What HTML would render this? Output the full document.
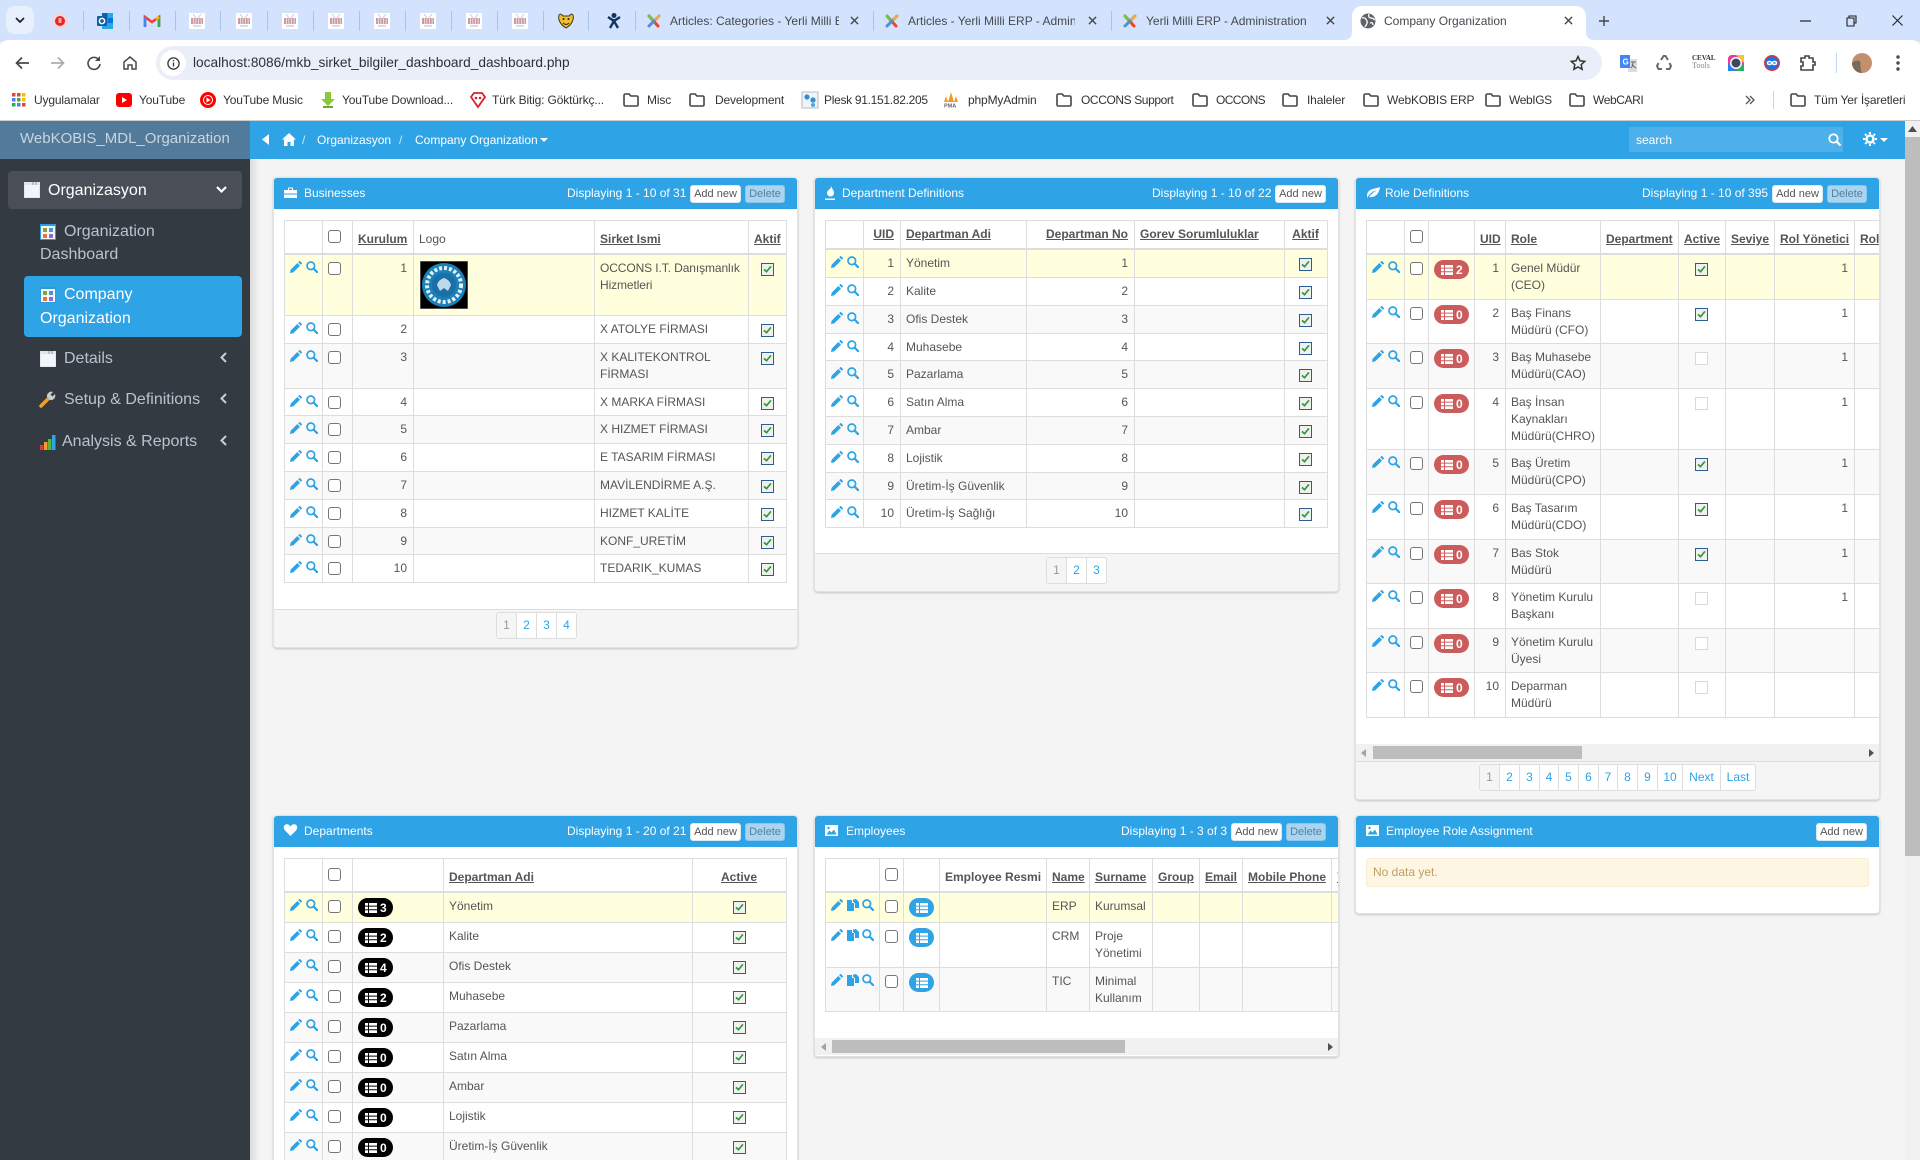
<!DOCTYPE html>
<html style="overflow:hidden;width:1920px;height:1160px"><head><meta charset="utf-8"><title>Company Organization</title>
<style>
html,body{margin:0;padding:0}
#root{position:relative;width:1920px;height:1160px;overflow:hidden;background:#f4f4f4;font-family:"Liberation Sans",Arial,sans-serif;color:#555}
.a,.t,.ic{position:absolute}
.t{white-space:nowrap}
.tb{font-size:12px;color:#45494f;line-height:16px;top:13px}
.bk{font-size:12px;color:#333;line-height:16px;top:92px;letter-spacing:-.15px}
.ic{overflow:visible}
.sep{position:absolute;width:1px;height:20px;top:11px;background:#a9c3ea}
.sd{font-size:16px;line-height:23px;color:#b9c3cd}
.ph{position:absolute;height:31px;background:#2ea3e6;border-radius:3px 3px 0 0}
.ptt{position:absolute;white-space:nowrap;font-size:12px;line-height:16px;color:#fff}
.btn{position:absolute;box-sizing:border-box;height:18px;background:#fff;border:1px solid #d8e8f2;border-radius:3px;font-size:11px;line-height:16px;text-align:center;color:#555}
.del{background:#a9d5f0;color:#567f9c;border-color:#8cc6ea}
.pn{position:absolute;background:#fff;border-radius:3px;box-shadow:0 0 0 1px #e2e2e2,0 1px 2px 1px rgba(0,0,0,.2)}
.ft{position:absolute;background:#f5f5f5;border-top:1px solid #ddd;box-sizing:border-box;border-radius:0 0 3px 3px}
.pg{position:absolute;display:flex;height:27px;box-sizing:border-box;border:1px solid #ddd;border-radius:3px;background:#fff;font-size:12px;line-height:25px;color:#2ea3e6}
.pg b{font-weight:normal;text-align:center;box-sizing:border-box;border-left:1px solid #ddd}
.pg b:first-child{border-left:0;background:#f5f5f5;color:#999}
table.g{position:absolute;table-layout:fixed;border-collapse:separate;border-spacing:0;border-top:1px solid #ddd;border-left:1px solid #ddd;font-size:12px;line-height:17px;color:#555;background:#fff}
.g td,.g th{box-sizing:border-box;border-right:1px solid #ddd;border-bottom:1px solid #ddd;padding:5px 6px 4px 5px;vertical-align:top;position:relative}
.g th{vertical-align:bottom;border-bottom-width:2px;font-weight:bold;text-align:left;white-space:nowrap;padding-bottom:5px}
.g th u{text-decoration:underline}
.r{text-align:right!important}
.c{text-align:center!important}
.y td{background:#ffffdd}
.o td{background:#f9f9f9}
.cb{position:absolute;left:5px;top:7px;display:block;width:13px;height:13px;box-sizing:border-box;border:1px solid #767676;border-radius:3px;background:#fff}
th .cb{top:9px}
.ck,.un{display:block;width:13px;height:13px;box-sizing:border-box;margin:3px auto 0;position:relative}
.ck{border:1px solid #2b5f92;background:#f0f0f0}
.ck:after{content:"";position:absolute;left:3px;top:0;width:3px;height:7px;box-sizing:content-box;border:solid #2f9a3a;border-width:0 2px 2px 0;transform:rotate(40deg) scale(.85)}
.un{border:1px solid #d9d9d9;background:#fff}
svg.p,svg.m,svg.f{position:absolute;top:6px;width:12px;height:12px;overflow:visible}
svg.p{left:5px}svg.m{left:21px}
.e5 svg.f{left:21px}.e5 svg.m{left:36px}
.bd{position:absolute;left:5px;top:5px;height:19px;width:35px;border-radius:10px;color:#fff;font-weight:bold;font-size:12px;line-height:20px;box-sizing:border-box;padding-left:22px}
.bd svg{position:absolute;left:7px;top:5px;width:12px;height:10px}
.rd{background:#cc5c5c}.bk2{background:#000}.bl{background:#2ea3e6;width:25px}
.bl svg{left:7px}
.clip{position:absolute;overflow:hidden}
</style></head><body><div id="root">
<svg width="0" height="0" style="position:absolute"><defs>
<symbol id="pen" viewBox="0 0 12 12"><path fill="#2ea3e6" d="M0 12l.6-3.2L7.3 2l2.7 2.7L3.2 11.4zM8.2 1.2L9.3.1c.2-.2.5-.2.7 0l1.9 1.9c.2.2.2.5 0 .7l-1.1 1.1z"/></symbol>
<symbol id="mag" viewBox="0 0 12 12"><circle cx="4.8" cy="4.8" r="3.8" fill="none" stroke="#2ea3e6" stroke-width="1.7"/><path d="M7.6 7.6l3.6 3.6" stroke="#2ea3e6" stroke-width="2.2" stroke-linecap="round"/></symbol>
<symbol id="cpy" viewBox="0 0 12 12"><path fill="#2ea3e6" d="M0 1h5v3h2v8H0zM6 0l2 2v1H6zM8 0h1l3 3v6H8V4H7V1z"/></symbol>
<symbol id="lst" viewBox="0 0 12 10"><path fill="#fff" d="M0 0h3v2.600H0zM4 0h8v2.600H4zM0 3.600h3v2.600H0zM4 3.600h8v2.600H4zM0 7.300h3V10H0zM4 7.300h8V10H4z"/></symbol>
<symbol id="acc" viewBox="0 0 16 16"><rect width="16" height="16" fill="#fff"/><path d="M4 1l3 4M12 1L9 5" stroke="#ccc"/><path d="M2 6h12M2 8h12M2 10h12" stroke="#9a3a4e" stroke-width="1.100" stroke-dasharray="2 .6"/><rect x="4" y="12" width="8" height="2" fill="#ddd"/></symbol>
<symbol id="jm" viewBox="0 0 16 16"><path d="M3 3l9 10" stroke="#f44321" stroke-width="3" stroke-linecap="round"/><path d="M13 3L3 13" stroke="#5091cd" stroke-width="3" stroke-linecap="round"/><path d="M3 3l3 3" stroke="#7ac143" stroke-width="3" stroke-linecap="round"/><path d="M13 3l-3 3" stroke="#f9a541" stroke-width="3" stroke-linecap="round"/></symbol>
<symbol id="x" viewBox="0 0 10 10"><path d="M1 1l8 8M9 1L1 9" stroke="#444" stroke-width="1.5"/></symbol>
<symbol id="fd" viewBox="0 0 16 14"><path d="M1 2.5C1 1.7 1.6 1 2.4 1h3.8l1.6 2h5.8c.8 0 1.4.6 1.4 1.4V11.6c0 .8-.6 1.4-1.4 1.4H2.4C1.6 13 1 12.4 1 11.6z" fill="none" stroke="#444" stroke-width="1.6"/></symbol>
<symbol id="win" viewBox="0 0 16 16"><rect width="16" height="16" fill="#f2f6fa" stroke="#aebdcb" stroke-width=".5"/><path d="M0 0h16v3H0z" fill="#dfe6ec"/><path d="M9 0v3M12 0v3" stroke="#8b99a6"/></symbol>
<symbol id="dash" viewBox="0 0 16 16"><rect width="16" height="16" fill="#2f9ad8"/><rect x="1" y="2" width="14" height="13" fill="#f3f7fa"/><rect x="3" y="4" width="4" height="4" fill="#8aa03c"/><rect x="9" y="4" width="4" height="4" fill="#4e93d0"/><rect x="3" y="10" width="4" height="4" fill="#e8743b"/><rect x="9" y="10" width="4" height="4" fill="#8c6bd1"/></symbol>
</defs></svg>

<!-- tab strip -->
<div class="a" style="left:0;top:0;width:1920px;height:42px;background:#d3e3fd"></div>
<div class="a" style="left:6px;top:6px;width:28px;height:28px;border-radius:9px;background:#e9f0fd"></div>
<svg class="ic" style="left:15px;top:17px" width="10" height="7"><path d="M1 1l4 4 4-4" fill="none" stroke="#222" stroke-width="1.7"/></svg>
<svg class="ic" style="left:52px;top:13px" width="16" height="16"><circle cx="8" cy="8" r="7.5" fill="#f9d4d4"/><circle cx="8" cy="8" r="5" fill="#e5262b"/><rect x="6.5" y="5" width="3" height="5" fill="#f7a0a0"/></svg>
<svg class="ic" style="left:97px;top:13px" width="16" height="16"><path d="M5 0h11v16H5z" fill="#28a8ea"/><path d="M5 0h5.500v5H5z" fill="#0364b8"/><path d="M10.500 5H16v5h-5.500z" fill="#0078d4"/><rect y="3" width="10" height="10" rx="1" fill="#0f5ea8"/><circle cx="5" cy="8" r="2.600" fill="none" stroke="#fff" stroke-width="1.500"/></svg>
<svg class="ic" style="left:144px;top:14px" width="16" height="14"><path d="M1 13V3l7 5 7-5v10" fill="none" stroke="#ea4335" stroke-width="2.600"/><path d="M1 13V3" stroke="#4285f4" stroke-width="2.600"/><path d="M15 13V3" stroke="#34a853" stroke-width="2.600"/><path d="M15 3l-3 2.200" stroke="#fbbc04" stroke-width="2.600"/></svg>
<svg class="ic" style="left:189px;top:13px" width="16" height="16"><use href="#acc"/></svg>
<svg class="ic" style="left:236px;top:13px" width="16" height="16"><use href="#acc"/></svg>
<svg class="ic" style="left:282px;top:13px" width="16" height="16"><use href="#acc"/></svg>
<svg class="ic" style="left:328px;top:13px" width="16" height="16"><use href="#acc"/></svg>
<svg class="ic" style="left:374px;top:13px" width="16" height="16"><use href="#acc"/></svg>
<svg class="ic" style="left:420px;top:13px" width="16" height="16"><use href="#acc"/></svg>
<svg class="ic" style="left:466px;top:13px" width="16" height="16"><use href="#acc"/></svg>
<svg class="ic" style="left:512px;top:13px" width="16" height="16"><use href="#acc"/></svg>
<svg class="ic" style="left:558px;top:13px" width="16" height="16"><path d="M1 2c2-2 3 0 4 1h6c1-1 2-3 4-1 1 3 0 9-7 13C1 11 0 5 1 2z" fill="#f0bf2e" stroke="#3a3a20"/><circle cx="5.500" cy="6" r="1" fill="#222"/><circle cx="10.500" cy="6" r="1" fill="#222"/><path d="M5 10c2 2 4 2 6 0" stroke="#222" fill="none"/></svg>
<svg class="ic" style="left:606px;top:13px" width="16" height="16"><circle cx="8" cy="2.500" r="2.500" fill="#12365f"/><path d="M2 4l6 4 6-4M4 15l4-7 4 7" stroke="#12365f" stroke-width="2.400" fill="none"/></svg>
<i class="sep" style="left:83px"></i><i class="sep" style="left:129px"></i><i class="sep" style="left:175px"></i><i class="sep" style="left:220px"></i><i class="sep" style="left:267px"></i><i class="sep" style="left:313px"></i><i class="sep" style="left:359px"></i><i class="sep" style="left:405px"></i><i class="sep" style="left:451px"></i><i class="sep" style="left:497px"></i><i class="sep" style="left:543px"></i><i class="sep" style="left:588px"></i><i class="sep" style="left:635px"></i><i class="sep" style="left:873px"></i><i class="sep" style="left:1111px"></i>
<svg class="ic" style="left:646px;top:13px" width="16" height="16"><use href="#jm"/></svg>
<div class="t tb" style="left:670px;width:169px;overflow:hidden">Articles: Categories - Yerli Milli ERP</div>
<svg class="ic" style="left:850px;top:16px" width="9" height="9"><use href="#x"/></svg>
<svg class="ic" style="left:884px;top:13px" width="16" height="16"><use href="#jm"/></svg>
<div class="t tb" style="left:908px;width:167px;overflow:hidden">Articles - Yerli Milli ERP - Administration</div>
<svg class="ic" style="left:1088px;top:16px" width="9" height="9"><use href="#x"/></svg>
<svg class="ic" style="left:1122px;top:13px" width="16" height="16"><use href="#jm"/></svg>
<div class="t tb" style="left:1146px">Yerli Milli ERP - Administration</div>
<svg class="ic" style="left:1326px;top:16px" width="9" height="9"><use href="#x"/></svg>
<svg class="ic" style="left:1344px;top:6px" width="250" height="36"><path d="M0 34c5 0 8-3 8-8V10c0-5 4-10 10-10h214c6 0 10 5 10 10v16c0 5 3 8 8 8v2H0z" fill="#fff"/></svg>
<svg class="ic" style="left:1360px;top:13px" width="16" height="16"><circle cx="8" cy="8" r="7.500" fill="#5f6368"/><path d="M2 5c3-1 4 1 5 3s-1 4-2 6M9 1c-1 2 0 4 2 4s3 1 4 2M10 10c2-1 3 0 3 2" stroke="#fff" stroke-width="1.300" fill="none"/></svg>
<div class="t tb" style="left:1384px">Company Organization</div>
<svg class="ic" style="left:1564px;top:16px" width="9" height="9"><use href="#x"/></svg>
<svg class="ic" style="left:1598px;top:15px" width="12" height="12"><path d="M6 1v10M1 6h10" stroke="#444" stroke-width="1.400"/></svg>
<svg class="ic" style="left:1800px;top:20px" width="11" height="2"><path d="M0 1h11" stroke="#222" stroke-width="1.200"/></svg>
<svg class="ic" style="left:1846px;top:15px" width="11" height="12"><path d="M3 3V1h7v7H8M1 3h7v8H1z" fill="none" stroke="#222" stroke-width="1.100"/></svg>
<svg class="ic" style="left:1892px;top:15px" width="11" height="11"><path d="M.5.500l10 10M10.500.500l-10 10" stroke="#222" stroke-width="1.100"/></svg>

<!-- toolbar -->
<div class="a" style="left:0;top:40px;width:1352px;height:81px;background:#fff;border-radius:8px 0 0 0"></div>
<div class="a" style="left:1352px;top:40px;width:568px;height:81px;background:#fff;border-radius:0 8px 0 0"></div>
<svg class="ic" style="left:15px;top:56px" width="14" height="14"><path d="M14 7H2M7 1.500L1.500 7 7 12.500" fill="none" stroke="#45494f" stroke-width="1.700"/></svg>
<svg class="ic" style="left:51px;top:56px" width="14" height="14"><path d="M0 7h12M7 1.500L12.500 7 7 12.500" fill="none" stroke="#a9adb3" stroke-width="1.700"/></svg>
<svg class="ic" style="left:87px;top:56px" width="14" height="14"><path d="M12 4A6 6 0 1 0 13 8" fill="none" stroke="#45494f" stroke-width="1.600"/><path d="M13 0v5H8z" fill="#45494f"/></svg>
<svg class="ic" style="left:123px;top:56px" width="14" height="14"><path d="M1 13V6l6-5 6 5v7H9V9H5v4z" fill="none" stroke="#45494f" stroke-width="1.500"/></svg>
<div class="a" style="left:156px;top:46px;width:1446px;height:34px;border-radius:17px;background:#e9eef8"></div>
<div class="a" style="left:160px;top:50px;width:26px;height:26px;border-radius:13px;background:#fff"></div>
<svg class="ic" style="left:167px;top:57px" width="13" height="13"><circle cx="6.500" cy="6.500" r="5.600" fill="none" stroke="#333" stroke-width="1.300"/><path d="M6.500 5.500v4M6.500 3v1.300" stroke="#333" stroke-width="1.300"/></svg>
<div class="t" style="left:193px;top:55px;font-size:13.7px;line-height:16px;color:#2c3136">localhost:8086/mkb_sirket_bilgiler_dashboard_dashboard.php</div>
<svg class="ic" style="left:1570px;top:55px" width="16" height="16"><path d="M8 1.500l2 4.300 4.700.6-3.500 3.200.9 4.700L8 12l-4.100 2.300.9-4.700L1.300 6.400 6 5.800z" fill="none" stroke="#333" stroke-width="1.500"/></svg>
<svg class="ic" style="left:1620px;top:55px" width="17" height="17"><path d="M8 4h9v13H8z" fill="#d9dce0"/><path d="M0 0h10v13H0z" fill="#4285f4"/><text x="2.500" y="9.500" font-size="8" font-weight="bold" fill="#fff" font-family="Liberation Sans">G</text><path d="M11 7h5M13 7c0 3-1 5-2 6M12 9c1 2 2 3 4 4" stroke="#666" fill="none"/></svg>
<svg class="ic" style="left:1656px;top:55px" width="16" height="16"><path d="M5 5l2.500-4h2L12 5M13.500 8l1.500 3-1.500 3H10M6 14H2.500L1 11l1.500-3" fill="none" stroke="#6a6a6a" stroke-width="2"/></svg>
<div class="t" style="left:1692px;top:54px;width:18px;font:bold 7px/8px 'Liberation Serif',serif;color:#333;text-align:center">CEVAL<br><span style="color:#888;font-weight:normal;font-size:8px">Tools</span></div>
<svg class="ic" style="left:1728px;top:55px" width="16" height="16"><rect width="16" height="16" rx="4" fill="#e6399b"/><path d="M8 0h8v8z" fill="#f7c331"/><path d="M16 8v8H8z" fill="#24b36b"/><path d="M0 8v8h8z" fill="#2f7ff0"/><circle cx="8" cy="8" r="6" fill="#fff"/><circle cx="8" cy="8" r="4.500" fill="#3a4a58"/></svg>
<svg class="ic" style="left:1764px;top:55px" width="16" height="16"><circle cx="8" cy="8" r="7.300" fill="#1a73e8" stroke="#e5332a" stroke-width="1.400"/><path d="M8 8c-1-2-4.500-2-4.500 0s3.500 2 4.500 0c1-2 4.500-2 4.500 0S9 10 8 8z" fill="none" stroke="#fff" stroke-width="1.400"/></svg>
<svg class="ic" style="left:1800px;top:55px" width="17" height="16"><path d="M1 3h4V1h4v2h4v4h2v3h-2v5H1v-4h2V7H1z" fill="none" stroke="#444" stroke-width="1.600"/></svg>
<div class="a" style="left:1836px;top:53px;width:1px;height:20px;background:#c5d8f3"></div>
<svg class="ic" style="left:1852px;top:53px" width="20" height="20"><circle cx="10" cy="10" r="10" fill="#c48f6e"/><path d="M0 10a10 10 0 0 0 10 10c-2-4-1-7-2-12-3-1-6 0-8 2z" fill="#7a6a5c"/></svg>
<svg class="ic" style="left:1896px;top:55px" width="4" height="16"><circle cx="2" cy="2" r="1.700" fill="#45494f"/><circle cx="2" cy="8" r="1.700" fill="#45494f"/><circle cx="2" cy="14" r="1.700" fill="#45494f"/></svg>

<!-- bookmarks -->
<svg class="ic" style="left:12px;top:93px" width="14" height="14"><g><rect width="3.500" height="3.500" fill="#ea4335"/><rect x="5" width="3.500" height="3.500" fill="#ea4335"/><rect x="10" width="3.500" height="3.500" fill="#fbbc04"/><rect y="5" width="3.500" height="3.500" fill="#4285f4"/><rect x="5" y="5" width="3.500" height="3.500" fill="#34a853"/><rect x="10" y="5" width="3.500" height="3.500" fill="#fbbc04"/><rect y="10" width="3.500" height="3.500" fill="#34a853"/><rect x="5" y="10" width="3.500" height="3.500" fill="#4285f4"/><rect x="10" y="10" width="3.500" height="3.500" fill="#ea4335"/></g></svg>
<div class="t bk" style="left:34px">Uygulamalar</div>
<svg class="ic" style="left:116px;top:93px" width="16" height="14"><rect width="16" height="14" rx="3" fill="#f00"/><path d="M6 4l5 3-5 3z" fill="#fff"/></svg>
<div class="t bk" style="left:139px">YouTube</div>
<svg class="ic" style="left:200px;top:92px" width="16" height="16"><circle cx="8" cy="8" r="8" fill="#f00"/><circle cx="8" cy="8" r="4.500" fill="none" stroke="#fff"/><path d="M6.500 5.500l4 2.500-4 2.500z" fill="#fff"/></svg>
<div class="t bk" style="left:223px">YouTube Music</div>
<svg class="ic" style="left:320px;top:92px" width="16" height="16"><path d="M5 0h6v7h4l-7 7-7-7h4z" fill="#8cc63f"/><rect x="3" y="14" width="10" height="2" fill="#6aa82e"/></svg>
<div class="t bk" style="left:342px">YouTube Download...</div>
<svg class="ic" style="left:470px;top:92px" width="16" height="16"><path d="M4 1h8l3 4-7 10L1 5z" fill="#fff" stroke="#d6222f" stroke-width="1.800"/><circle cx="6" cy="6" r="1.300" fill="#d6222f"/><circle cx="10" cy="6" r="1.300" fill="#d6222f"/></svg>
<div class="t bk" style="left:492px">Türk Bitig: Göktürkç...</div>
<svg class="ic" style="left:623px;top:93px" width="16" height="14"><use href="#fd"/></svg>
<div class="t bk" style="left:647px">Misc</div>
<svg class="ic" style="left:689px;top:93px" width="16" height="14"><use href="#fd"/></svg>
<div class="t bk" style="left:715px">Development</div>
<svg class="ic" style="left:802px;top:92px" width="16" height="16"><rect width="16" height="16" fill="#eef4fa" stroke="#bbb"/><circle cx="5" cy="5" r="2.600" fill="#2f8fd0"/><circle cx="11" cy="8" r="2.600" fill="#2f8fd0"/><circle cx="11" cy="13" r="2" fill="#4aa8e0"/></svg>
<div class="t bk" style="left:824px;letter-spacing:-.3px">Plesk 91.151.82.205</div>
<svg class="ic" style="left:943px;top:92px" width="16" height="16"><path d="M8 0l3 10H5zM3 4l2 6H1zM13 4l2 6h-4z" fill="#f09a2c"/><text x="1" y="15.500" font-size="5.500" font-weight="bold" fill="#666" font-family="Liberation Sans">PMA</text></svg>
<div class="t bk" style="left:968px">phpMyAdmin</div>
<svg class="ic" style="left:1056px;top:93px" width="16" height="14"><use href="#fd"/></svg>
<div class="t bk" style="left:1081px;letter-spacing:-.4px">OCCONS Support</div>
<svg class="ic" style="left:1192px;top:93px" width="16" height="14"><use href="#fd"/></svg>
<div class="t bk" style="left:1216px;letter-spacing:-.6px">OCCONS</div>
<svg class="ic" style="left:1282px;top:93px" width="16" height="14"><use href="#fd"/></svg>
<div class="t bk" style="left:1307px">Ihaleler</div>
<svg class="ic" style="left:1363px;top:93px" width="16" height="14"><use href="#fd"/></svg>
<div class="t bk" style="left:1387px">WebKOBIS ERP</div>
<svg class="ic" style="left:1485px;top:93px" width="16" height="14"><use href="#fd"/></svg>
<div class="t bk" style="left:1509px;letter-spacing:-.4px">WebIGS</div>
<svg class="ic" style="left:1569px;top:93px" width="16" height="14"><use href="#fd"/></svg>
<div class="t bk" style="left:1593px;letter-spacing:-.4px">WebCARI</div>
<svg class="ic" style="left:1745px;top:95px" width="10" height="10"><path d="M1 1l4 4-4 4M5 1l4 4-4 4" fill="none" stroke="#555" stroke-width="1.300"/></svg>
<div class="a" style="left:1773px;top:91px;width:1px;height:18px;background:#c5d8f3"></div>
<svg class="ic" style="left:1790px;top:93px" width="16" height="14"><use href="#fd"/></svg>
<div class="t bk" style="left:1814px">Tüm Yer İşaretleri</div>
<div class="a" style="left:0;top:120px;width:1920px;height:1px;background:#ccc"></div>

<!-- app chrome -->
<div class="a" style="left:250px;top:159px;width:1655px;height:1001px;background:linear-gradient(to right,#dcdcdc,#f4f4f4 10px)"></div>
<div class="a" style="left:1905px;top:121px;width:15px;height:1039px;background:#f1f1f1"></div>
<div class="a" style="left:1905px;top:137px;width:15px;height:719px;background:#bdbdbd"></div>
<svg class="ic" style="left:1908px;top:126px" width="9" height="6"><path d="M4.500 0L9 6H0z" fill="#505050"/></svg>
<div class="a" style="left:250px;top:121px;width:1655px;height:38px;background:#2ea3e6"></div>
<div class="a" style="left:0;top:121px;width:250px;height:38px;background:#527a9b"></div>
<div class="t" style="left:20px;top:130px;font-size:15px;line-height:18px;color:#c9d6e0">WebKOBIS_MDL_Organization</div>
<svg class="ic" style="left:262px;top:134px" width="8" height="11"><path d="M7 0v11L0 5.500z" fill="#fff"/></svg>
<svg class="ic" style="left:282px;top:133px" width="14" height="13"><path d="M7 0l7 6.500h-2V13H8.500V9h-3v4H2V6.500H0z" fill="#fff"/></svg>
<div class="t" style="left:302px;top:132px;font-size:12px;line-height:16px;color:#cfe9f9">/</div>
<div class="t" style="left:317px;top:132px;font-size:12px;line-height:16px;color:#fff">Organizasyon</div>
<div class="t" style="left:399px;top:132px;font-size:12px;line-height:16px;color:#cfe9f9">/</div>
<div class="t" style="left:415px;top:132px;font-size:12px;line-height:16px;color:#fff">Company Organization</div>
<svg class="ic" style="left:540px;top:138px" width="8" height="4"><path d="M0 0h8L4 4z" fill="#fff"/></svg>
<div class="a" style="left:1629px;top:127px;width:214px;height:25px;background:#4eb0ea;border-radius:2px"></div>
<div class="t" style="left:1636px;top:132px;font-size:12px;line-height:16px;color:#fff">search</div>
<svg class="ic" style="left:1828px;top:133px" width="13" height="13"><circle cx="5.500" cy="5.500" r="4.200" fill="none" stroke="#fff" stroke-width="1.800"/><path d="M8.500 8.500l4 4" stroke="#fff" stroke-width="2.200"/></svg>
<svg class="ic" style="left:1863px;top:132px" width="14" height="14"><circle cx="7" cy="7" r="3.500" fill="none" stroke="#fff" stroke-width="2.500"/><path d="M7 0v14M0 7h14M2 2l10 10M12 2L2 12" stroke="#fff" stroke-width="2" stroke-dasharray="2 10"/></svg>
<svg class="ic" style="left:1880px;top:138px" width="8" height="4"><path d="M0 0h8L4 4z" fill="#fff"/></svg>

<!-- sidebar -->
<div class="a" style="left:0;top:159px;width:250px;height:1001px;background:#343a41"></div>
<div class="a" style="left:8px;top:171px;width:234px;height:38px;background:#4a4f57;border-radius:4px"></div>
<svg class="ic" style="left:24px;top:182px" width="16" height="16"><use href="#win"/></svg>
<div class="t sd" style="left:48px;top:179px;color:#fff">Organizasyon</div>
<svg class="ic" style="left:216px;top:186px" width="11" height="8"><path d="M1 1l4.500 4.500L10 1" fill="none" stroke="#fff" stroke-width="2.200"/></svg>
<svg class="ic" style="left:40px;top:224px" width="16" height="16"><use href="#dash"/></svg>
<div class="t sd" style="left:64px;top:220px">Organization</div>
<div class="t sd" style="left:40px;top:243px">Dashboard</div>
<div class="a" style="left:24px;top:276px;width:218px;height:61px;background:#2ea3e6;border-radius:4px"></div>
<svg class="ic" style="left:40px;top:287px" width="16" height="16"><use href="#dash"/></svg>
<div class="t sd" style="left:64px;top:283px;color:#fff">Company</div>
<div class="t sd" style="left:40px;top:307px;color:#fff">Organization</div>
<svg class="ic" style="left:40px;top:351px" width="16" height="16"><use href="#win"/></svg>
<div class="t sd" style="left:64px;top:347px">Details</div>
<svg class="ic" style="left:220px;top:352px" width="7" height="11"><path d="M6 1L1.500 5.500 6 10" fill="none" stroke="#c6ced6" stroke-width="2"/></svg>
<svg class="ic" style="left:40px;top:391px" width="16" height="16"><path d="M1 15l7-7" stroke="#f0a030" stroke-width="3.500" stroke-linecap="round"/><path d="M7 6a4.500 4.500 0 0 1 6-5l-2.500 2.500 2 2L15 3a4.500 4.500 0 0 1-5 6z" fill="#c6ced6"/></svg>
<div class="t sd" style="left:64px;top:388px">Setup &amp; Definitions</div>
<svg class="ic" style="left:220px;top:393px" width="7" height="11"><path d="M6 1L1.500 5.500 6 10" fill="none" stroke="#c6ced6" stroke-width="2"/></svg>
<svg class="ic" style="left:40px;top:434px" width="16" height="16"><rect y="11" width="3.500" height="5" fill="#e33"/><rect x="4" y="8" width="3.500" height="8" fill="#f0a030"/><rect x="8" y="5" width="3.500" height="11" fill="#5cb531"/><rect x="12" y="1" width="3.500" height="15" fill="#2ea3e6"/></svg>
<div class="t sd" style="left:62px;top:430px">Analysis &amp; Reports</div>
<svg class="ic" style="left:220px;top:435px" width="7" height="11"><path d="M6 1L1.500 5.500 6 10" fill="none" stroke="#c6ced6" stroke-width="2"/></svg>

<!-- Panel 1 -->
<div class="pn" style="left:274px;top:178px;width:523px;height:469px"></div>
<div class="ph" style="left:274px;top:178px;width:523px"></div>
<svg class="ic" style="left:284px;top:186px" width="13" height="13"><path d="M0 4h13v3.500H0zM0 8.500h13V12H0zM4 4V1.500h5V4H8V2.500H5V4z" fill="#fff"/></svg>
<div class="ptt" style="left:304px;top:185px">Businesses</div>
<div class="ptt" style="left:567px;top:185px">Displaying 1 - 10 of 31</div>
<div class="btn" style="left:690px;top:185px;width:51px">Add new</div>
<div class="btn del" style="left:745px;top:185px;width:40px">Delete</div>
<table class="g" style="left:284px;top:220px;width:503px">
<col width="38"><col width="30"><col width="61"><col width="181"><col width="154"><col width="38">
<tr style="height:34px"><th></th><th><i class="cb"></i></th><th><u>Kurulum</u></th><th style="font-weight:normal">Logo</th><th><u>Sirket Ismi</u></th><th class="c"><u>Aktif</u></th></tr>
<tr class="y" style="height:61px"><td><svg class="p"><use href="#pen"/></svg><svg class="m"><use href="#mag"/></svg></td><td><i class="cb"></i></td><td class="r">1</td><td><svg class="a" style="left:6px;top:6px" width="48" height="48"><rect width="48" height="48" fill="#000" stroke="#999"/><circle cx="24" cy="24" r="22" fill="#1a80b8"/><circle cx="24" cy="24" r="17" fill="none" stroke="#e4f1f8" stroke-width="4" stroke-dasharray="3 2"/><circle cx="24" cy="24" r="12" fill="#1a6fa6"/><path d="M24 17c3 1 6 3 7 7l-3 6-4-3-4 3-3-6c1-4 4-6 7-7z" fill="#bcd9ea"/></svg></td><td style="white-space:nowrap;letter-spacing:-.1px">OCCONS I.T. Danışmanlık<br>Hizmetleri</td><td><i class="ck"></i></td></tr>
<tr style="height:28px"><td><svg class="p"><use href="#pen"/></svg><svg class="m"><use href="#mag"/></svg></td><td><i class="cb"></i></td><td class="r">2</td><td></td><td>X ATOLYE FİRMASI</td><td><i class="ck"></i></td></tr>
<tr class="o" style="height:45px"><td><svg class="p"><use href="#pen"/></svg><svg class="m"><use href="#mag"/></svg></td><td><i class="cb"></i></td><td class="r">3</td><td></td><td>X KALITEKONTROL FİRMASI</td><td><i class="ck"></i></td></tr>
<tr style="height:27px"><td><svg class="p"><use href="#pen"/></svg><svg class="m"><use href="#mag"/></svg></td><td><i class="cb"></i></td><td class="r">4</td><td></td><td>X MARKA FİRMASI</td><td><i class="ck"></i></td></tr>
<tr class="o" style="height:28px"><td><svg class="p"><use href="#pen"/></svg><svg class="m"><use href="#mag"/></svg></td><td><i class="cb"></i></td><td class="r">5</td><td></td><td>X HIZMET FİRMASI</td><td><i class="ck"></i></td></tr>
<tr style="height:28px"><td><svg class="p"><use href="#pen"/></svg><svg class="m"><use href="#mag"/></svg></td><td><i class="cb"></i></td><td class="r">6</td><td></td><td>E TASARIM FİRMASI</td><td><i class="ck"></i></td></tr>
<tr class="o" style="height:28px"><td><svg class="p"><use href="#pen"/></svg><svg class="m"><use href="#mag"/></svg></td><td><i class="cb"></i></td><td class="r">7</td><td></td><td>MAVİLENDİRME A.Ş.</td><td><i class="ck"></i></td></tr>
<tr style="height:28px"><td><svg class="p"><use href="#pen"/></svg><svg class="m"><use href="#mag"/></svg></td><td><i class="cb"></i></td><td class="r">8</td><td></td><td>HIZMET KALİTE</td><td><i class="ck"></i></td></tr>
<tr class="o" style="height:27px"><td><svg class="p"><use href="#pen"/></svg><svg class="m"><use href="#mag"/></svg></td><td><i class="cb"></i></td><td class="r">9</td><td></td><td>KONF_URETİM</td><td><i class="ck"></i></td></tr>
<tr style="height:28px"><td><svg class="p"><use href="#pen"/></svg><svg class="m"><use href="#mag"/></svg></td><td><i class="cb"></i></td><td class="r">10</td><td></td><td>TEDARIK_KUMAS</td><td><i class="ck"></i></td></tr>
</table>
<div class="ft" style="left:274px;top:609px;width:523px;height:38px"></div>
<div class="pg" style="left:496px;top:612px"><b style="width:19px">1</b><b style="width:20px">2</b><b style="width:20px">3</b><b style="width:20px">4</b></div>

<!-- Panel 2 -->
<div class="pn" style="left:815px;top:178px;width:523px;height:413px"></div>
<div class="ph" style="left:815px;top:178px;width:523px"></div>
<svg class="ic" style="left:825px;top:186px" width="11" height="14"><path d="M6 0c1 3 3 4 3 7a3.500 3.500 0 0 1-7 0c0-2 2-3 2-4 1 1 1 1 2-3zM0 12.500h10V14H0z" fill="#fff"/></svg>
<div class="ptt" style="left:842px;top:185px">Department Definitions</div>
<div class="ptt" style="left:1152px;top:185px">Displaying 1 - 10 of 22</div>
<div class="btn" style="left:1275px;top:185px;width:51px">Add new</div>
<table class="g" style="left:825px;top:220px;width:503px">
<col width="38"><col width="37"><col width="126"><col width="108"><col width="150"><col width="43">
<tr style="height:29px"><th></th><th class="r"><u>UID</u></th><th><u>Departman Adi</u></th><th class="r"><u>Departman No</u></th><th><u>Gorev Sorumluluklar</u></th><th class="c"><u>Aktif</u></th></tr>
<tr class="y" style="height:28px"><td><svg class="p"><use href="#pen"/></svg><svg class="m"><use href="#mag"/></svg></td><td class="r">1</td><td>Yönetim</td><td class="r">1</td><td></td><td><i class="ck"></i></td></tr>
<tr style="height:28px"><td><svg class="p"><use href="#pen"/></svg><svg class="m"><use href="#mag"/></svg></td><td class="r">2</td><td>Kalite</td><td class="r">2</td><td></td><td><i class="ck"></i></td></tr>
<tr class="o" style="height:28px"><td><svg class="p"><use href="#pen"/></svg><svg class="m"><use href="#mag"/></svg></td><td class="r">3</td><td>Ofis Destek</td><td class="r">3</td><td></td><td><i class="ck"></i></td></tr>
<tr style="height:27px"><td><svg class="p"><use href="#pen"/></svg><svg class="m"><use href="#mag"/></svg></td><td class="r">4</td><td>Muhasebe</td><td class="r">4</td><td></td><td><i class="ck"></i></td></tr>
<tr class="o" style="height:28px"><td><svg class="p"><use href="#pen"/></svg><svg class="m"><use href="#mag"/></svg></td><td class="r">5</td><td>Pazarlama</td><td class="r">5</td><td></td><td><i class="ck"></i></td></tr>
<tr style="height:28px"><td><svg class="p"><use href="#pen"/></svg><svg class="m"><use href="#mag"/></svg></td><td class="r">6</td><td>Satın Alma</td><td class="r">6</td><td></td><td><i class="ck"></i></td></tr>
<tr class="o" style="height:28px"><td><svg class="p"><use href="#pen"/></svg><svg class="m"><use href="#mag"/></svg></td><td class="r">7</td><td>Ambar</td><td class="r">7</td><td></td><td><i class="ck"></i></td></tr>
<tr style="height:28px"><td><svg class="p"><use href="#pen"/></svg><svg class="m"><use href="#mag"/></svg></td><td class="r">8</td><td>Lojistik</td><td class="r">8</td><td></td><td><i class="ck"></i></td></tr>
<tr class="o" style="height:27px"><td><svg class="p"><use href="#pen"/></svg><svg class="m"><use href="#mag"/></svg></td><td class="r">9</td><td>Üretim-İş Güvenlik</td><td class="r">9</td><td></td><td><i class="ck"></i></td></tr>
<tr style="height:28px"><td><svg class="p"><use href="#pen"/></svg><svg class="m"><use href="#mag"/></svg></td><td class="r">10</td><td>Üretim-İş Sağlığı</td><td class="r">10</td><td></td><td><i class="ck"></i></td></tr>
</table>
<div class="ft" style="left:815px;top:553px;width:523px;height:38px"></div>
<div class="pg" style="left:1046px;top:557px"><b style="width:19px">1</b><b style="width:20px">2</b><b style="width:20px">3</b></div>

<!-- Panel 3 -->
<div class="pn" style="left:1356px;top:178px;width:523px;height:621px"></div>
<div class="ph" style="left:1356px;top:178px;width:523px"></div>
<svg class="ic" style="left:1366px;top:187px" width="14" height="12"><path d="M1 11C3 7 7 4 11 3 8 5 5 7 3 10c5 1 10-2 11-10C10 2 1 1 1 9z" fill="#fff"/></svg>
<div class="ptt" style="left:1385px;top:185px">Role Definitions</div>
<div class="ptt" style="left:1642px;top:185px">Displaying 1 - 10 of 395</div>
<div class="btn" style="left:1772px;top:185px;width:51px">Add new</div>
<div class="btn del" style="left:1827px;top:185px;width:40px">Delete</div>
<div class="clip" style="left:1356px;top:219px;width:523px;height:520px">
<table class="g" style="left:10px;top:1px;width:588px">
<col width="38"><col width="24"><col width="46"><col width="31"><col width="95"><col width="78"><col width="47"><col width="49"><col width="80"><col width="99">
<tr style="height:34px"><th></th><th><i class="cb"></i></th><th></th><th class="r"><u>UID</u></th><th><u>Role</u></th><th><u>Department</u></th><th><u>Active</u></th><th><u>Seviye</u></th><th><u>Rol Yönetici</u></th><th><u>Rol Tipi</u></th></tr>
<tr class="y" style="height:45px"><td><svg class="p"><use href="#pen"/></svg><svg class="m"><use href="#mag"/></svg></td><td><i class="cb"></i></td><td><span class="bd rd"><svg><use href="#lst"/></svg>2</span></td><td class="r">1</td><td>Genel Müdür (CEO)</td><td></td><td><i class="ck"></i></td><td></td><td class="r">1</td><td></td></tr>
<tr style="height:44px"><td><svg class="p"><use href="#pen"/></svg><svg class="m"><use href="#mag"/></svg></td><td><i class="cb"></i></td><td><span class="bd rd"><svg><use href="#lst"/></svg>0</span></td><td class="r">2</td><td>Baş Finans Müdürü (CFO)</td><td></td><td><i class="ck"></i></td><td></td><td class="r">1</td><td></td></tr>
<tr class="o" style="height:45px"><td><svg class="p"><use href="#pen"/></svg><svg class="m"><use href="#mag"/></svg></td><td><i class="cb"></i></td><td><span class="bd rd"><svg><use href="#lst"/></svg>0</span></td><td class="r">3</td><td>Baş Muhasebe Müdürü(CAO)</td><td></td><td><i class="un"></i></td><td></td><td class="r">1</td><td></td></tr>
<tr style="height:61px"><td><svg class="p"><use href="#pen"/></svg><svg class="m"><use href="#mag"/></svg></td><td><i class="cb"></i></td><td><span class="bd rd"><svg><use href="#lst"/></svg>0</span></td><td class="r">4</td><td>Baş İnsan Kaynakları Müdürü(CHRO)</td><td></td><td><i class="un"></i></td><td></td><td class="r">1</td><td></td></tr>
<tr class="o" style="height:45px"><td><svg class="p"><use href="#pen"/></svg><svg class="m"><use href="#mag"/></svg></td><td><i class="cb"></i></td><td><span class="bd rd"><svg><use href="#lst"/></svg>0</span></td><td class="r">5</td><td>Baş Üretim Müdürü(CPO)</td><td></td><td><i class="ck"></i></td><td></td><td class="r">1</td><td></td></tr>
<tr style="height:45px"><td><svg class="p"><use href="#pen"/></svg><svg class="m"><use href="#mag"/></svg></td><td><i class="cb"></i></td><td><span class="bd rd"><svg><use href="#lst"/></svg>0</span></td><td class="r">6</td><td>Baş Tasarım Müdürü(CDO)</td><td></td><td><i class="ck"></i></td><td></td><td class="r">1</td><td></td></tr>
<tr class="o" style="height:44px"><td><svg class="p"><use href="#pen"/></svg><svg class="m"><use href="#mag"/></svg></td><td><i class="cb"></i></td><td><span class="bd rd"><svg><use href="#lst"/></svg>0</span></td><td class="r">7</td><td>Bas Stok Müdürü</td><td></td><td><i class="ck"></i></td><td></td><td class="r">1</td><td></td></tr>
<tr style="height:45px"><td><svg class="p"><use href="#pen"/></svg><svg class="m"><use href="#mag"/></svg></td><td><i class="cb"></i></td><td><span class="bd rd"><svg><use href="#lst"/></svg>0</span></td><td class="r">8</td><td>Yönetim Kurulu Başkanı</td><td></td><td><i class="un"></i></td><td></td><td class="r">1</td><td></td></tr>
<tr class="o" style="height:44px"><td><svg class="p"><use href="#pen"/></svg><svg class="m"><use href="#mag"/></svg></td><td><i class="cb"></i></td><td><span class="bd rd"><svg><use href="#lst"/></svg>0</span></td><td class="r">9</td><td>Yönetim Kurulu Üyesi</td><td></td><td><i class="un"></i></td><td></td><td></td><td></td></tr>
<tr style="height:45px"><td><svg class="p"><use href="#pen"/></svg><svg class="m"><use href="#mag"/></svg></td><td><i class="cb"></i></td><td><span class="bd rd"><svg><use href="#lst"/></svg>0</span></td><td class="r">10</td><td>Deparman Müdürü</td><td></td><td><i class="un"></i></td><td></td><td></td><td></td></tr>
</table>
</div>
<div class="a" style="left:1356px;top:744px;width:523px;height:17px;background:#f1f1f1"></div>
<div class="a" style="left:1373px;top:746px;width:209px;height:13px;background:#bdbdbd"></div>
<svg class="ic" style="left:1361px;top:749px" width="5" height="8"><path d="M5 0v8L0 4z" fill="#a3a3a3"/></svg>
<svg class="ic" style="left:1869px;top:749px" width="5" height="8"><path d="M0 0v8l5-4z" fill="#505050"/></svg>
<div class="ft" style="left:1356px;top:761px;width:523px;height:38px"></div>
<div class="pg" style="left:1479px;top:764px"><b style="width:19px">1</b><b style="width:20px">2</b><b style="width:20px">3</b><b style="width:19px">4</b><b style="width:20px">5</b><b style="width:20px">6</b><b style="width:19px">7</b><b style="width:20px">8</b><b style="width:20px">9</b><b style="width:25px">10</b><b style="width:38px">Next</b><b style="width:35px">Last</b></div>

<!-- Panel 4 -->
<div class="pn" style="left:274px;top:816px;width:523px;height:360px"></div>
<div class="ph" style="left:274px;top:816px;width:523px"></div>
<svg class="ic" style="left:284px;top:824px" width="13" height="12"><path d="M6.500 12L1 6.500C-1 4-.5 1 2 .4 4-.2 5.500 1 6.500 2.500 7.500 1 9-.2 11 .4c2.500.6 3 3.600 1 6.100z" fill="#fff"/></svg>
<div class="ptt" style="left:304px;top:823px">Departments</div>
<div class="ptt" style="left:567px;top:823px">Displaying 1 - 20 of 21</div>
<div class="btn" style="left:690px;top:823px;width:51px">Add new</div>
<div class="btn del" style="left:745px;top:823px;width:40px">Delete</div>
<table class="g" style="left:284px;top:858px;width:503px">
<col width="38"><col width="30"><col width="91"><col width="249"><col width="94">
<tr style="height:34px"><th></th><th><i class="cb"></i></th><th></th><th><u>Departman Adi</u></th><th class="c"><u>Active</u></th></tr>
<tr class="y" style="height:30px"><td><svg class="p"><use href="#pen"/></svg><svg class="m"><use href="#mag"/></svg></td><td><i class="cb"></i></td><td><span class="bd bk2"><svg><use href="#lst"/></svg>3</span></td><td>Yönetim</td><td><i class="ck"></i></td></tr>
<tr style="height:30px"><td><svg class="p"><use href="#pen"/></svg><svg class="m"><use href="#mag"/></svg></td><td><i class="cb"></i></td><td><span class="bd bk2"><svg><use href="#lst"/></svg>2</span></td><td>Kalite</td><td><i class="ck"></i></td></tr>
<tr class="o" style="height:30px"><td><svg class="p"><use href="#pen"/></svg><svg class="m"><use href="#mag"/></svg></td><td><i class="cb"></i></td><td><span class="bd bk2"><svg><use href="#lst"/></svg>4</span></td><td>Ofis Destek</td><td><i class="ck"></i></td></tr>
<tr style="height:30px"><td><svg class="p"><use href="#pen"/></svg><svg class="m"><use href="#mag"/></svg></td><td><i class="cb"></i></td><td><span class="bd bk2"><svg><use href="#lst"/></svg>2</span></td><td>Muhasebe</td><td><i class="ck"></i></td></tr>
<tr class="o" style="height:30px"><td><svg class="p"><use href="#pen"/></svg><svg class="m"><use href="#mag"/></svg></td><td><i class="cb"></i></td><td><span class="bd bk2"><svg><use href="#lst"/></svg>0</span></td><td>Pazarlama</td><td><i class="ck"></i></td></tr>
<tr style="height:30px"><td><svg class="p"><use href="#pen"/></svg><svg class="m"><use href="#mag"/></svg></td><td><i class="cb"></i></td><td><span class="bd bk2"><svg><use href="#lst"/></svg>0</span></td><td>Satın Alma</td><td><i class="ck"></i></td></tr>
<tr class="o" style="height:30px"><td><svg class="p"><use href="#pen"/></svg><svg class="m"><use href="#mag"/></svg></td><td><i class="cb"></i></td><td><span class="bd bk2"><svg><use href="#lst"/></svg>0</span></td><td>Ambar</td><td><i class="ck"></i></td></tr>
<tr style="height:30px"><td><svg class="p"><use href="#pen"/></svg><svg class="m"><use href="#mag"/></svg></td><td><i class="cb"></i></td><td><span class="bd bk2"><svg><use href="#lst"/></svg>0</span></td><td>Lojistik</td><td><i class="ck"></i></td></tr>
<tr class="o" style="height:30px"><td><svg class="p"><use href="#pen"/></svg><svg class="m"><use href="#mag"/></svg></td><td><i class="cb"></i></td><td><span class="bd bk2"><svg><use href="#lst"/></svg>0</span></td><td>Üretim-İş Güvenlik</td><td><i class="ck"></i></td></tr>
</table>

<!-- Panel 5 -->
<div class="pn" style="left:815px;top:816px;width:523px;height:240px"></div>
<div class="ph" style="left:815px;top:816px;width:523px"></div>
<svg class="ic" style="left:825px;top:825px" width="13" height="11"><path d="M0 0h13v11H0z" fill="#fff"/><path d="M1.500 9.500l3-4 2 2 2.500-3 2.500 5z" fill="#2ea3e6"/><circle cx="3.500" cy="3" r="1.200" fill="#2ea3e6"/></svg>
<div class="ptt" style="left:846px;top:823px">Employees</div>
<div class="ptt" style="left:1121px;top:823px">Displaying 1 - 3 of 3</div>
<div class="btn" style="left:1231px;top:823px;width:51px">Add new</div>
<div class="btn del" style="left:1286px;top:823px;width:40px">Delete</div>
<div class="clip" style="left:815px;top:857px;width:523px;height:181px">
<table class="g e5" style="left:10px;top:1px;width:567px">
<col width="54"><col width="24"><col width="36"><col width="107"><col width="43"><col width="63"><col width="47"><col width="43"><col width="89"><col width="60">
<tr style="height:34px"><th></th><th><i class="cb"></i></th><th></th><th>Employee Resmi</th><th><u>Name</u></th><th><u>Surname</u></th><th><u>Group</u></th><th><u>Email</u></th><th><u>Mobile Phone</u></th><th><u>Yetki</u></th></tr>
<tr class="y" style="height:30px"><td><svg class="p"><use href="#pen"/></svg><svg class="f"><use href="#cpy"/></svg><svg class="m"><use href="#mag"/></svg></td><td><i class="cb"></i></td><td><span class="bd bl"><svg><use href="#lst"/></svg></span></td><td></td><td>ERP</td><td>Kurumsal</td><td></td><td></td><td></td><td></td></tr>
<tr style="height:45px"><td><svg class="p"><use href="#pen"/></svg><svg class="f"><use href="#cpy"/></svg><svg class="m"><use href="#mag"/></svg></td><td><i class="cb"></i></td><td><span class="bd bl"><svg><use href="#lst"/></svg></span></td><td></td><td>CRM</td><td>Proje Yönetimi</td><td></td><td></td><td></td><td></td></tr>
<tr class="o" style="height:44px"><td><svg class="p"><use href="#pen"/></svg><svg class="f"><use href="#cpy"/></svg><svg class="m"><use href="#mag"/></svg></td><td><i class="cb"></i></td><td><span class="bd bl"><svg><use href="#lst"/></svg></span></td><td></td><td>TIC</td><td>Minimal Kullanım</td><td></td><td></td><td></td><td></td></tr>
</table>
</div>
<div class="a" style="left:815px;top:1038px;width:523px;height:17px;background:#f1f1f1"></div>
<div class="a" style="left:832px;top:1040px;width:293px;height:13px;background:#bdbdbd"></div>
<svg class="ic" style="left:821px;top:1043px" width="5" height="8"><path d="M5 0v8L0 4z" fill="#a3a3a3"/></svg>
<svg class="ic" style="left:1328px;top:1043px" width="5" height="8"><path d="M0 0v8l5-4z" fill="#505050"/></svg>

<!-- Panel 6 -->
<div class="pn" style="left:1356px;top:816px;width:523px;height:97px"></div>
<div class="ph" style="left:1356px;top:816px;width:523px"></div>
<svg class="ic" style="left:1366px;top:825px" width="13" height="11"><path d="M0 0h13v11H0z" fill="#fff"/><path d="M1.500 9.500l3-4 2 2 2.500-3 2.500 5z" fill="#2ea3e6"/><circle cx="3.500" cy="3" r="1.200" fill="#2ea3e6"/></svg>
<div class="ptt" style="left:1386px;top:823px">Employee Role Assignment</div>
<div class="btn" style="left:1816px;top:823px;width:51px">Add new</div>
<div class="a" style="left:1366px;top:858px;width:503px;height:29px;box-sizing:border-box;background:#fcf6e3;border:1px solid #faedd0;border-radius:3px;font-size:12px;line-height:27px;padding-left:6px;color:#c09f63">No data yet.</div>
</div></body></html>
